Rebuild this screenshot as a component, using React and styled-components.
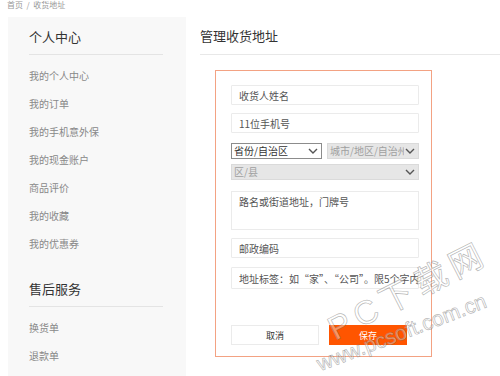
import styled, { createGlobalStyle } from 'styled-components';

const GlobalStyle = createGlobalStyle`
  html, body {
    margin: 0;
    padding: 0;
    background: #fff;
    font-family: "Noto Sans CJK SC", "Noto Sans", sans-serif;
  }
  * { box-sizing: border-box; }
`;

const menus = [
  {
    title: '个人中心',
    items: ['我的个人中心', '我的订单', '我的手机意外保', '我的现金账户', '商品评价', '我的收藏', '我的优惠券'],
  },
  { title: '售后服务', items: ['换货单', '退款单'] },
];

function Chevron() {
  return (
    <ChevronIcon viewBox="0 0 10 6" width="10" height="6">
      <path d="M1 1l4 4 4-4" fill="none" stroke="currentColor" strokeWidth="1.4" />
    </ChevronIcon>
  );
}

function FakeSelect({ w, mt, disabled, children }) {
  return (
    <SelectBox $w={w} $mt={mt} $disabled={disabled}>
      <SelectText>{children}</SelectText>
      <Chevron />
    </SelectBox>
  );
}

export default function App() {
  return (
    <Page>
      <GlobalStyle />
      <Crumb>首页&nbsp;&nbsp;/&nbsp;&nbsp;收货地址</Crumb>
      <Main>
        <Sidebar>
          {menus.map((m, i) => (
            <Section key={m.title} $first={i === 0}>
              <SectionTitle>{m.title}</SectionTitle>
              <MenuList>
                {m.items.map((it) => (
                  <MenuItem key={it}>{it}</MenuItem>
                ))}
              </MenuList>
            </Section>
          ))}
        </Sidebar>
        <Content>
          <PageTitle>管理收货地址</PageTitle>
          <FormBox>
            <Input $mt={0} placeholder="收货人姓名" />
            <Input $mt={8} placeholder="11位手机号" />
            <SelectRow>
              <FakeSelect w={91}>省份/自治区</FakeSelect>
              <FakeSelect w={92} disabled>城市/地区/自治州</FakeSelect>
            </SelectRow>
            <FakeSelect w={188} mt={5} disabled>区/县</FakeSelect>
            <TextArea placeholder="路名或街道地址，门牌号" />
            <Input $mt={8} placeholder="邮政编码" />
            <Input $mt={9} $h={22} placeholder="地址标签：如“家”、“公司”。限5个字内" />
            <Buttons>
              <Button>取消</Button>
              <Button $primary>保存</Button>
            </Buttons>
          </FormBox>
        </Content>
      </Main>
      <Watermark>PC下载网</Watermark>
      <UrlWatermark>www.pcsoft.com.cn</UrlWatermark>
    </Page>
  );
}

const Page = styled.div`
  position: relative;
  width: 500px;
  height: 376px;
  overflow: hidden;
`;

const Crumb = styled.div`
  height: 17px;
  padding-left: 7px;
  font-size: 8px;
  line-height: 10px;
  color: #999;
`;

const Main = styled.div`
  display: flex;
  padding-left: 8px;
`;

const Sidebar = styled.div`
  width: 178px;
  height: 359px;
  background: #f8f8f8;
  padding: 10px 0 0 21px;
`;

const Section = styled.div`
  width: 134px;
  margin-top: ${(p) => (p.$first ? 0 : 21)}px;
`;

const SectionTitle = styled.div`
  font-size: 13px;
  line-height: 20px;
  color: #333;
  padding-bottom: 7px;
  border-bottom: 1px solid #e4e4e4;
`;

const MenuList = styled.div`
  margin-top: 7px;
  display: flex;
  flex-direction: column;
`;

const MenuItem = styled.div`
  font-size: 10px;
  line-height: 28px;
  color: #888;
`;

const Content = styled.div`
  flex: 1;
  padding: 9px 0 0 14px;
`;

const PageTitle = styled.div`
  font-size: 13px;
  line-height: 20px;
  color: #333;
  padding-bottom: 8px;
  border-bottom: 1px solid #e8e8e8;
`;

const FormBox = styled.div`
  margin: 15px 0 0 15px;
  width: 217px;
  height: 287px;
  border: 1.5px solid #f3a283;
  padding: 14px 12px 0 15px;
  display: flex;
  flex-direction: column;
`;

const Input = styled.input`
  display: block;
  width: 188px;
  height: ${(p) => p.$h || 20}px;
  margin-top: ${(p) => p.$mt}px;
  border: 1px solid #ebebeb;
  border-radius: 1px;
  padding: 0 0 0 7px;
  font-family: inherit;
  font-size: 10px;
  outline: none;
  &::placeholder { color: #555; }
`;

const SelectRow = styled.div`
  display: flex;
  gap: 5px;
  margin-top: 10px;
`;

const SelectBox = styled.div`
  position: relative;
  display: flex;
  align-items: center;
  width: ${(p) => p.$w}px;
  height: 16px;
  margin-top: ${(p) => p.$mt || 0}px;
  padding: 0 14px 0 2px;
  overflow: hidden;
  background: ${(p) => (p.$disabled ? '#e6e6e6' : '#fff')};
  border: 1px solid ${(p) => (p.$disabled ? '#dadada' : '#8c8c8c')};
  color: ${(p) => (p.$disabled ? '#a0a0a0' : '#333')};
`;

const SelectText = styled.span`
  font-size: 10px;
  line-height: 14px;
  white-space: nowrap;
  overflow: hidden;
`;

const ChevronIcon = styled.svg`
  position: absolute;
  right: 3px;
  top: 4px;
  color: #555;
`;

const TextArea = styled.textarea`
  display: block;
  width: 188px;
  height: 39px;
  margin-top: 11px;
  border: 1px solid #ebebeb;
  padding: 2px 7px;
  font-family: inherit;
  font-size: 10px;
  resize: none;
  outline: none;
  &::placeholder { color: #555; }
`;

const Buttons = styled.div`
  display: flex;
  gap: 10px;
  margin-top: 36px;
`;

const Button = styled.div`
  width: ${(p) => (p.$primary ? 78 : 88)}px;
  height: 20px;
  display: flex;
  align-items: center;
  justify-content: center;
  font-size: 9px;
  color: ${(p) => (p.$primary ? '#fff' : '#333')};
  background: ${(p) => (p.$primary ? '#ff5500' : '#fff')};
  border: 1px solid ${(p) => (p.$primary ? '#ff5500' : '#ebebeb')};
`;

const markText = `
  position: absolute;
  pointer-events: none;
  white-space: nowrap;
  color: rgba(255, 255, 255, 0.4);
  -webkit-text-stroke: 0.7px rgba(110, 110, 110, 0.5);
  transform-origin: left bottom;
`;

const Watermark = styled.div`
  ${markText}
  left: 338px;
  top: 312px;
  transform: rotate(-27deg);
  font-family: "Liberation Sans", "Noto Sans CJK SC", sans-serif;
  font-size: 33px;
  line-height: 34px;
  letter-spacing: 6px;
`;

const UrlWatermark = styled.div`
  ${markText}
  left: 322px;
  top: 352px;
  transform: rotate(-21deg);
  font-family: "Liberation Sans", sans-serif;
  font-size: 21px;
  line-height: 24px;
`;
